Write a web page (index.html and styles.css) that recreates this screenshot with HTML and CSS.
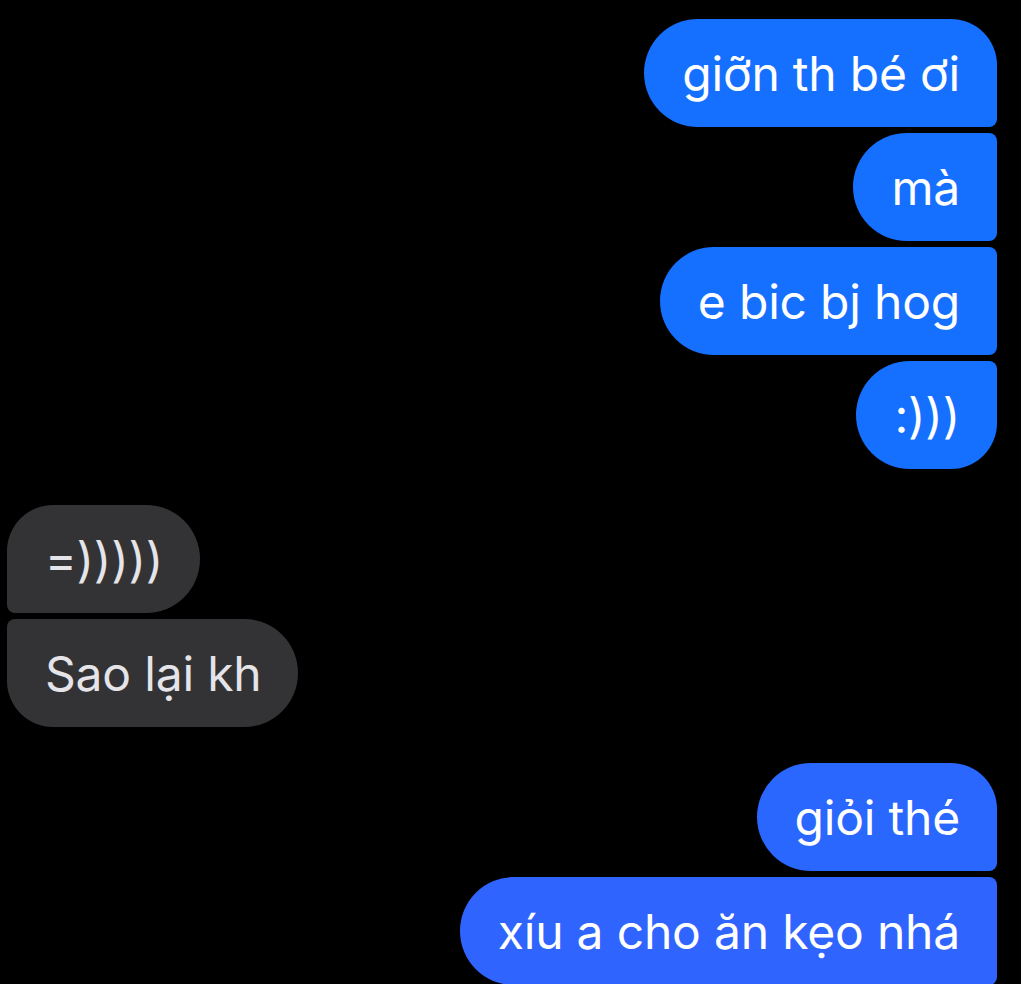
FILE: index.html
```html
<!DOCTYPE html>
<html lang="vi">
<head>
<meta charset="utf-8">
<title>Chat</title>
<link rel="stylesheet" href="styles.css">
</head>
<body>
<main class="chat">
  <section class="group sent">
    <div class="bubble first b1">giỡn th bé ơi</div>
    <div class="bubble mid b2">mà</div>
    <div class="bubble mid b3">e bic bj hog</div>
    <div class="bubble last b4">:)))</div>
  </section>
  <section class="group received">
    <div class="bubble first">=)))))</div>
    <div class="bubble last">Sao lại kh</div>
  </section>
  <section class="group sent">
    <div class="bubble first b7">giỏi thé</div>
    <div class="bubble mid b8">xíu a cho ăn kẹo nhá</div>
  </section>
</main>
</body>
</html>
```

FILE: styles.css
```css
html, body {
  margin: 0;
  padding: 0;
  background: #000;
  height: 100%;
  overflow: hidden;
}

.chat {
  display: flex;
  flex-direction: column;
  gap: 36px;
  padding: 19px 24px 0 7px;
  font-family: Inter, "Noto Sans", sans-serif;
}

.group {
  display: flex;
  flex-direction: column;
  gap: 6px;
}

.sent { align-items: flex-end; }
.received { align-items: flex-start; }

.bubble {
  box-sizing: border-box;
  height: 108px;
  padding: 3px 37px 0 38px;
  font-size: 48px;
  line-height: 104px;
  letter-spacing: -0.2px;
  white-space: nowrap;
}

.sent .bubble {
  color: #fff;
  background: #1570ff;
  border-radius: 54px 8px 8px 54px;
}
.sent .bubble.first { border-radius: 54px 46px 8px 54px; }
.sent .bubble.last { border-radius: 54px 8px 46px 54px; }

.received .bubble {
  color: #e4e4e9;
  background: #333335;
  border-radius: 8px 54px 54px 8px;
}
.received .bubble.first { border-radius: 46px 54px 54px 8px; }
.received .bubble.last { border-radius: 8px 54px 54px 46px; }

.sent .b1 { background: #1570ff; }
.sent .b2 { background: #1570ff; }
.sent .b3 { background: #1570ff; }
.sent .b4 { background: #1670ff; }
.sent .b7 { background: #2a67ff; }
.sent .b8 { background: #3064ff; }
```
